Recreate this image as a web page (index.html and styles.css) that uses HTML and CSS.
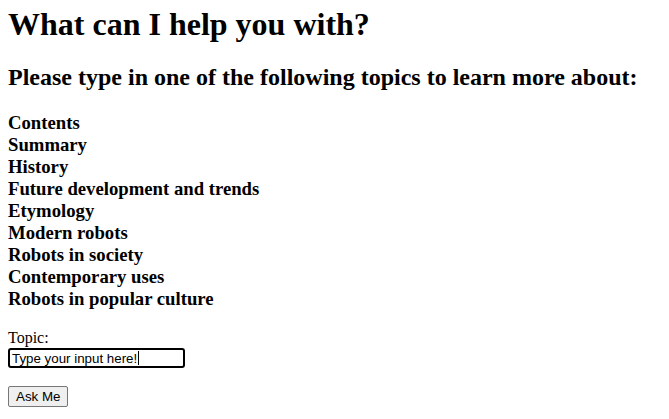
FILE: index.html
```html
<!DOCTYPE html>
<html>
<head>
<meta charset="utf-8">
<link rel="stylesheet" href="styles.css">
</head>
<body>
<h1 class="title">What can I help you with?</h1>
<h2 class="subtitle">Please type in one of the following topics to learn more about:</h2>
<h3 class="topics">Contents<br>Summary<br>History<br>Future development and trends<br>Etymology<br>Modern robots<br>Robots in society<br>Contemporary uses<br>Robots in popular culture</h3>
<form class="ask-form">
<label class="topic-label" for="topic">Topic:</label><br>
<span class="input-wrap"><input class="topic-input" id="topic" type="text" value="Type your input here!"><span class="caret"></span></span><br><br>
<button class="ask-btn" type="button">Ask Me</button>
</form>
</body>
</html>
```
FILE: styles.css
```css
html, body {
  font-family: "Liberation Serif", "Times New Roman", serif;
  color: #000;
  background: #fff;
}
body {
  margin: 0 8px 8px 8px;
}
.title {
  font-size: 32px;
  margin: 6px 0 21px 0;
}
.subtitle {
  font-size: 24px;
  margin: 20px 0 20px 0;
}
.topics {
  font-size: 18.72px;
  line-height: 22px;
  margin: 21px 0 19px 0;
}
.ask-form {
  font-size: 16px;
  line-height: 18px;
}
.topic-label {
  font-size: 16px;
}
.input-wrap {
  position: relative;
  display: inline-block;
  vertical-align: top;
  margin-top: 1px;
}
.topic-input {
  display: block;
  box-sizing: border-box;
  font-family: "Liberation Sans", Arial, sans-serif;
  font-size: 13.33px;
  width: 177px;
  height: 20px;
  padding: 0 2px;
  border: 2px solid #000;
  border-radius: 3px;
  margin: 0;
  color: #000;
  outline: none;
}
.caret {
  position: absolute;
  left: 130px;
  top: 3px;
  width: 1px;
  height: 14px;
  background: #000;
}
.ask-btn {
  box-sizing: border-box;
  font-family: "Liberation Sans", Arial, sans-serif;
  font-size: 13.33px;
  height: 21px;
  padding: 0 7px;
  background: #efefef;
  border: 1px solid #767676;
  border-radius: 2px;
  color: #000;
  margin: 0;
}
```
